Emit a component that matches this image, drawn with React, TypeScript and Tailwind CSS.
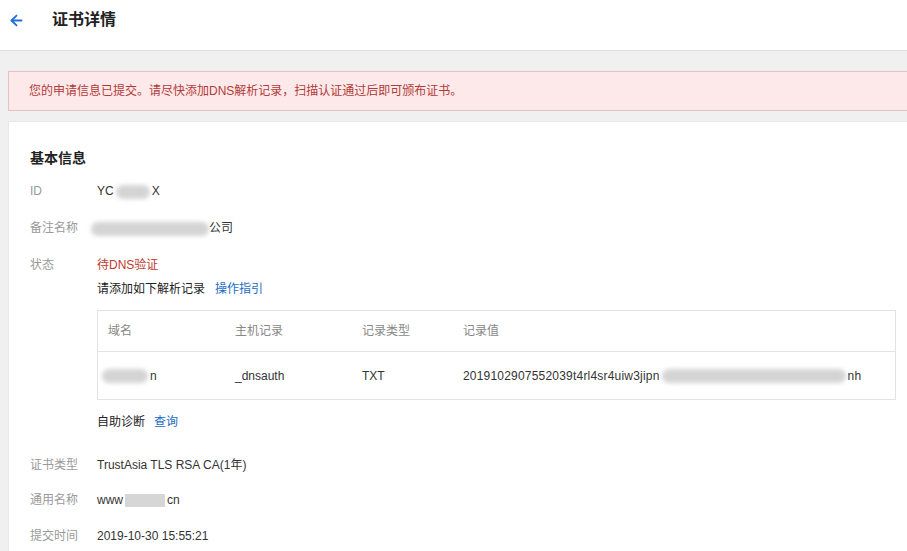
import { ArrowLeft } from "lucide-react";

function Blur({ w, className = "" }: { w: string; className?: string }) {
  return (
    <span
      className={`inline-block h-[14px] align-middle rounded-full bg-[#d4d4d4] blur-[2px] ${w} ${className}`}
    />
  );
}

function Row({ label, children, className = "" }: { label: string; children: React.ReactNode; className?: string }) {
  return (
    <div className={`flex text-[12px] leading-[20px] ${className}`}>
      <div className="w-[67px] shrink-0 text-[#999]">{label}</div>
      <div className="min-w-0 flex-1 text-[#333]">{children}</div>
    </div>
  );
}

export default function App() {
  return (
    <div
      className="h-[551px] w-[907px] overflow-hidden bg-[#f0f0f0]"
      style={{ fontFamily: '"Liberation Sans", "Noto Sans CJK SC", sans-serif' }}
    >
      <header className="flex h-[51px] items-center border-b border-[#dcdcdc] bg-white pb-[10px] pl-[8px]">
        <ArrowLeft className="h-[17px] w-[17px] text-[#1f6fd6]" strokeWidth={2.6} />
        <h1 className="ml-[27px] text-[16px] font-bold text-[#222]">证书详情</h1>
      </header>

      <div className="pl-[8px] pt-[20px]">
        <div className="flex h-[40px] items-center border border-r-0 border-[#e6c2c2] bg-[#fde9e9] pl-[20px] text-[12px] text-[#b33a3a]">
          您的申请信息已提交。请尽快添加DNS解析记录，扫描认证通过后即可颁布证书。
        </div>

        <div className="mt-[10px] border-t border-l border-[#e8e8e8] bg-white pl-[21px] pt-[26px] pb-[20px]">
          <h2 className="text-[14px] font-bold leading-[20px] text-[#222]">基本信息</h2>

          <Row label="ID" className="mt-[13px]">
            YC<Blur w="w-[34px]" className="mx-[2px]" />X
          </Row>
          <Row label="备注名称" className="mt-[17px]">
            <span className="-ml-[6px]">
              <Blur w="w-[118px]" />
            </span>
            公司
          </Row>
          <Row label="状态" className="mt-[17px]">
            <div className="text-[#c0392b]">待DNS验证</div>
            <div className="mt-[4px] text-[#222]">
              请添加如下解析记录
              <span className="ml-[10px] text-[#1a6cc4]">操作指引</span>
            </div>
            <div className="mr-[11px] mt-[11px] border border-[#e3e3e3]">
              <div className="grid h-[41px] grid-cols-[127px_127px_101px_1fr] items-center border-b border-[#e3e3e3] text-[#888]">
                <div className="pl-[10px]">域名</div>
                <div className="pl-[10px]">主机记录</div>
                <div className="pl-[10px]">记录类型</div>
                <div className="pl-[10px]">记录值</div>
              </div>
              <div className="grid h-[47px] grid-cols-[127px_127px_101px_1fr] items-center text-[#333]">
                <div className="pl-[4px]">
                  <Blur w="w-[46px]" className="mr-[2px]" />n
                </div>
                <div className="pl-[10px]">_dnsauth</div>
                <div className="pl-[10px]">TXT</div>
                <div className="pl-[10px] tracking-[0.2px]">
                  2019102907552039t4rl4sr4uiw3jipn
                  <Blur w="w-[184px]" className="mx-[2px]" />
                  nh
                </div>
              </div>
            </div>
            <div className="mt-[12px] text-[#222]">
              自助诊断
              <span className="ml-[9px] text-[#1a6cc4]">查询</span>
            </div>
          </Row>
          <Row label="证书类型" className="mt-[23px]">
            TrustAsia TLS RSA CA(1年)
          </Row>
          <Row label="通用名称" className="mt-[15px]">
            www
            <span className="mx-[2px] inline-block h-[13px] w-[40px] align-middle bg-[#d6d6d6]" />
            cn
          </Row>
          <Row label="提交时间" className="mt-[16px]">
            2019-10-30 15:55:21
          </Row>
        </div>
      </div>
    </div>
  );
}
